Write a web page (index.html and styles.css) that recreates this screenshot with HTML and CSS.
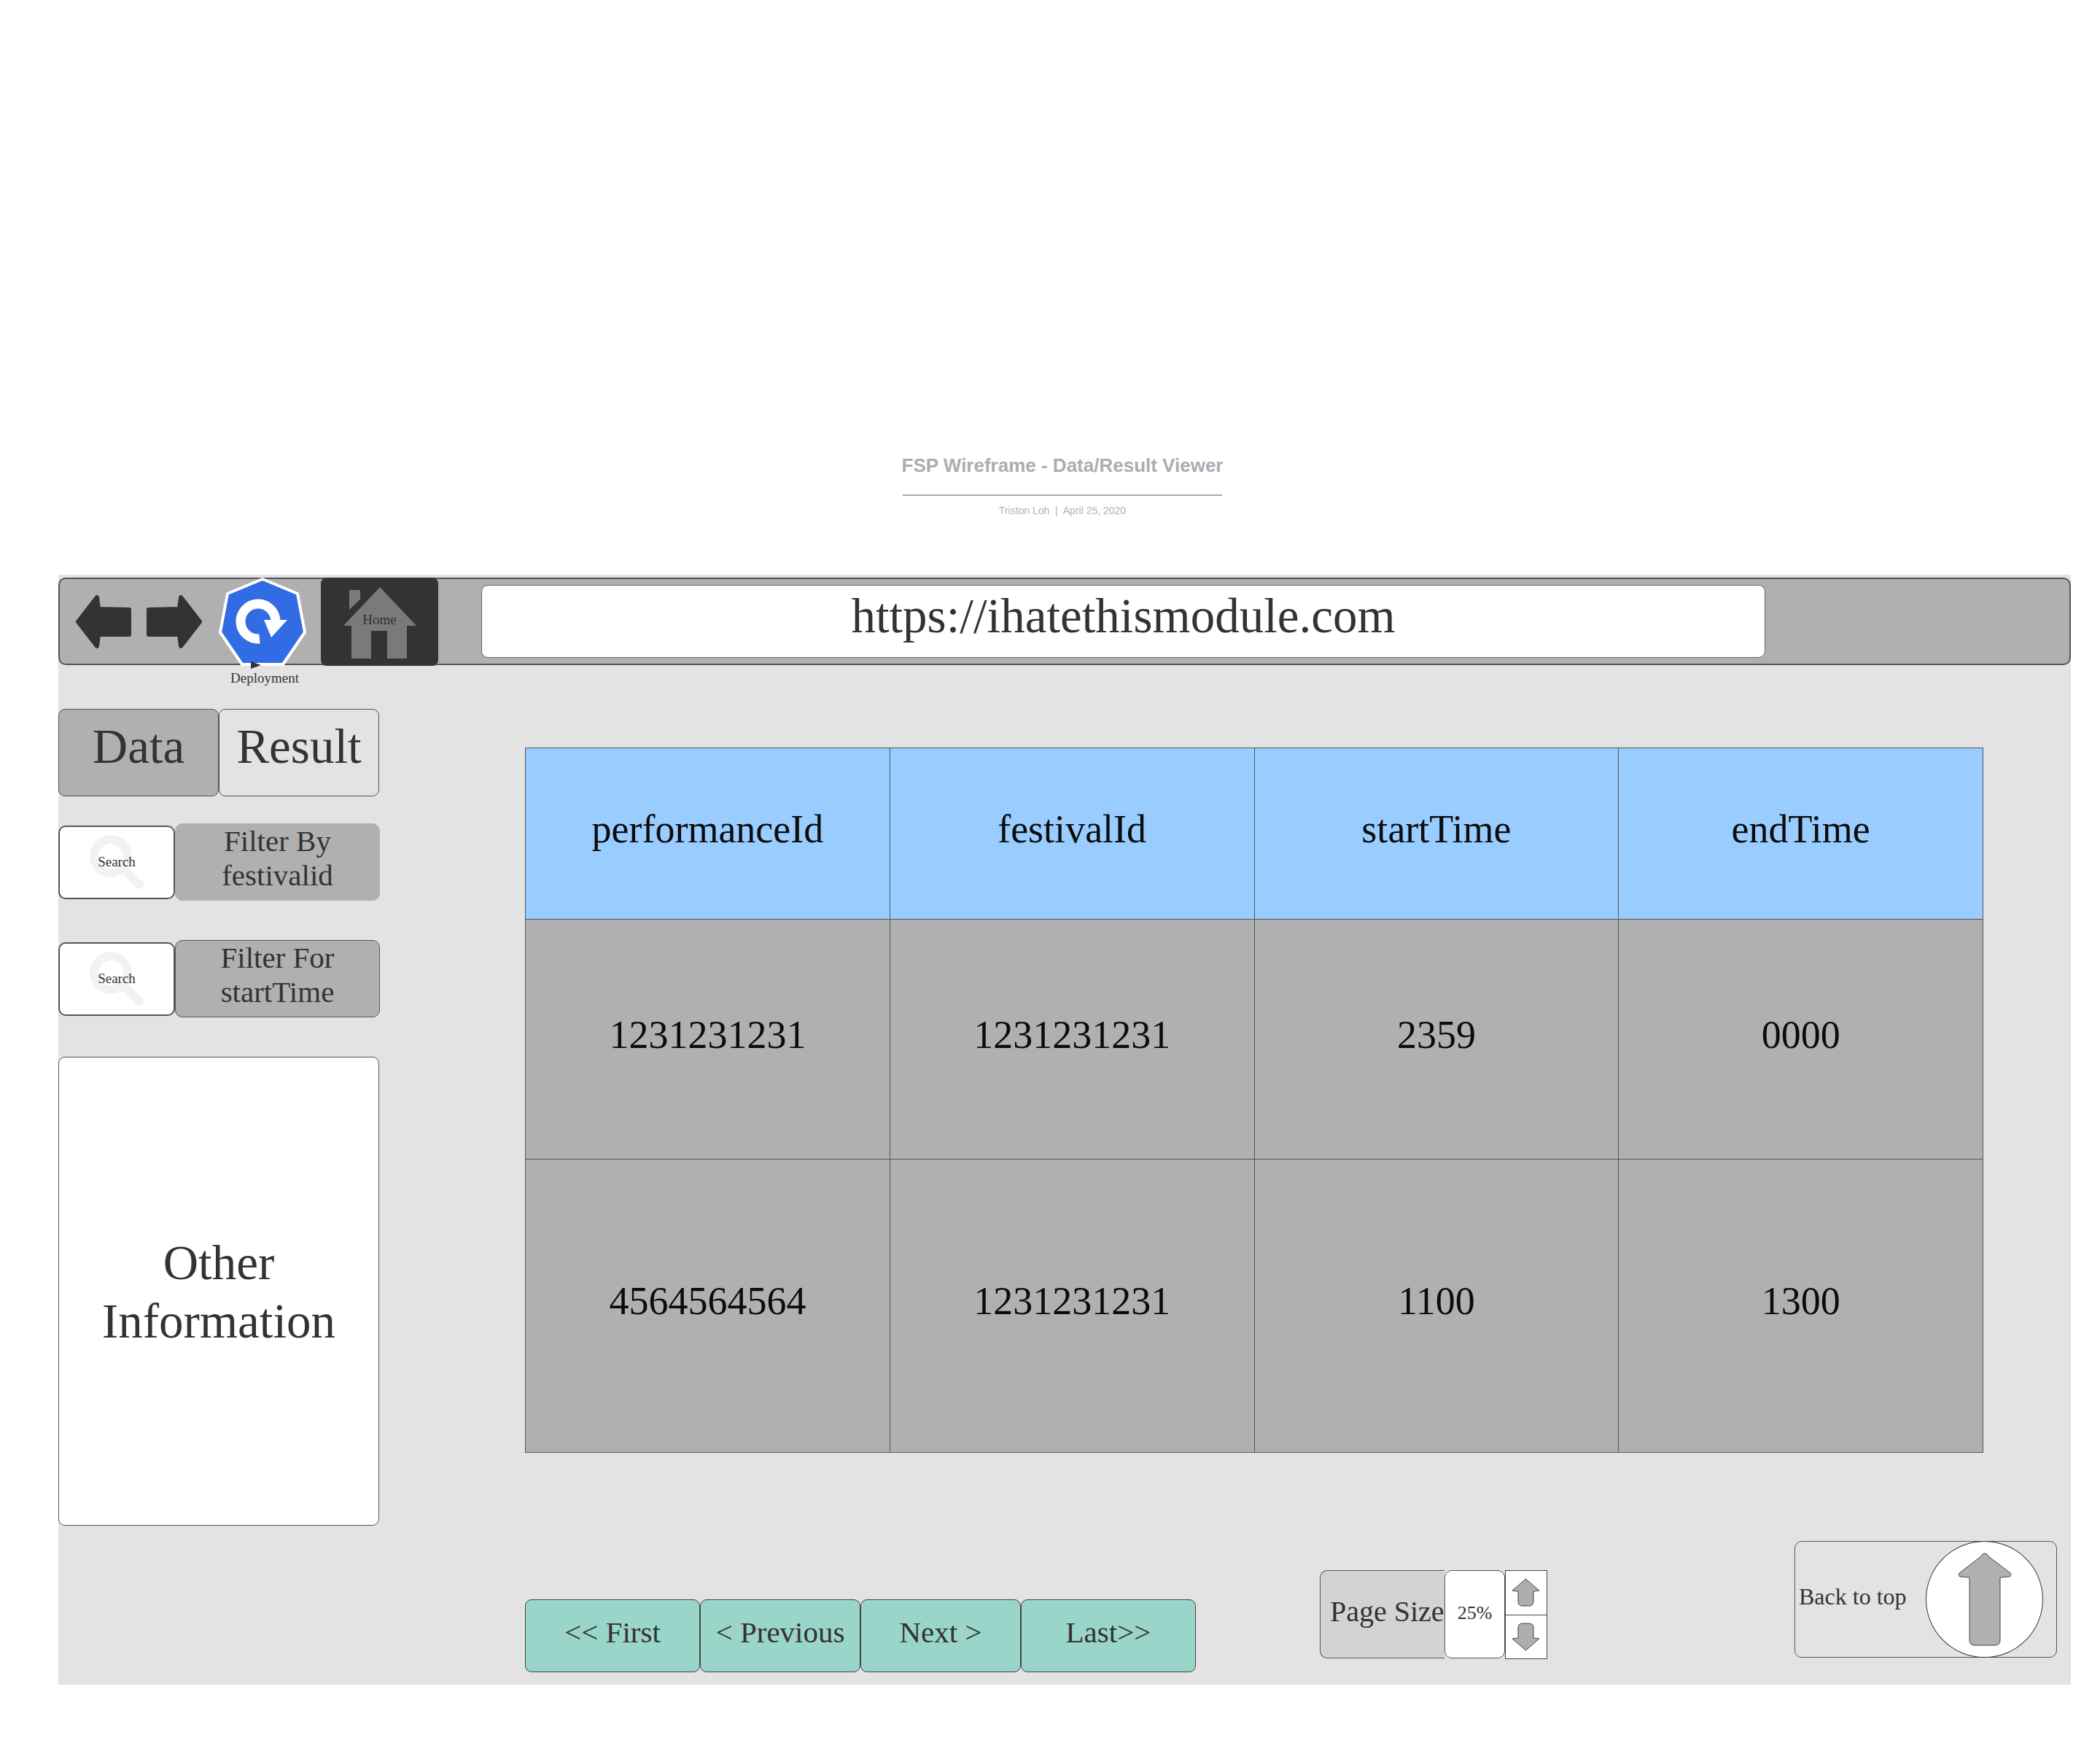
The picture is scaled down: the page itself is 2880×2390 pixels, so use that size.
FILE: index.html
```html
<!doctype html>
<html>
<head>
<meta charset="utf-8">
<title>FSP Wireframe - Data/Result Viewer</title>
<link rel="stylesheet" href="styles.css">
</head>
<body>

<div class="doc-head">
  <div class="doc-title">FSP Wireframe - Data/Result Viewer</div>
  <div class="doc-rule"></div>
  <div class="doc-sub">Triston Loh &nbsp;|&nbsp; April 25, 2020</div>
</div>

<div class="canvas">

  <div class="toolbar">
    <svg class="nav-arrow" viewBox="0 0 78 73">
      <path d="M4 36.500 L30 3 L32 19 L74 20 L74 54 L32 54 L30 70 Z"/>
    </svg>
    <svg class="nav-arrow" viewBox="0 0 78 73">
      <path d="M74 36.500 L48 3 L46 19 L4 20 L4 54 L46 54 L48 70 Z"/>
    </svg>
    <svg class="deploy-icon" viewBox="0 0 120 120">
      <polygon class="hept" points="60,2 108,22 118,75 88,119 32,119 2,75 12,22"/>
      <path class="swirl" d="M56 84 A24 24 0 1 1 78 60"/>
      <polygon class="swirl-head" points="62,58 94,58 72,82"/>
      <polygon class="pointer" points="44,115 58,120 44,125"/>
    </svg>
    <div class="home">
      <svg class="home-icon" viewBox="0 0 161 121">
        <polygon points="39,17 54,17 54,30 39,44"/>
        <path d="M81 13 L131 66 L118 66 L118 111 L91 111 L91 73 L69 73 L69 111 L42 111 L42 66 L31 66 Z"/>
      </svg>
      <span class="home-label">Home</span>
    </div>
    <div class="url-bar">https://ihatethismodule.com</div>
  </div>

  <div class="deploy-row">Deployment</div>

  <div class="workspace">

    <div class="sidebar">
      <div class="tabs">
        <div class="tab tab-on">Data</div>
        <div class="tab">Result</div>
      </div>

      <div class="filter first-filter">
        <div class="search">
          <svg class="lens" viewBox="0 0 74 74">
            <circle cx="29" cy="29" r="23"/>
            <line x1="46" y1="46" x2="68" y2="68"/>
          </svg>
          <span class="search-label">Search</span>
        </div>
        <div class="filter-name no-line">Filter By<br>festivalid</div>
      </div>

      <div class="filter">
        <div class="search">
          <svg class="lens" viewBox="0 0 74 74">
            <circle cx="29" cy="29" r="23"/>
            <line x1="46" y1="46" x2="68" y2="68"/>
          </svg>
          <span class="search-label">Search</span>
        </div>
        <div class="filter-name">Filter For<br>startTime</div>
      </div>

      <div class="other-info">Other<br>Information</div>
    </div>

    <div class="main">
      <table class="grid">
        <tr class="head-row">
          <th>performanceId</th>
          <th>festivalId</th>
          <th>startTime</th>
          <th>endTime</th>
        </tr>
        <tr class="row-one">
          <td>1231231231</td>
          <td>1231231231</td>
          <td>2359</td>
          <td>0000</td>
        </tr>
        <tr class="row-two">
          <td>4564564564</td>
          <td>1231231231</td>
          <td>1100</td>
          <td>1300</td>
        </tr>
      </table>

      <div class="bottom-bar">
        <div class="pager">
          <div class="page-btn wide">&lt;&lt; First</div>
          <div class="page-btn">&lt; Previous</div>
          <div class="page-btn">Next &gt;</div>
          <div class="page-btn wide">Last&gt;&gt;</div>
        </div>

        <div class="page-size">
          <div class="size-label">Page Size</div>
          <div class="size-value">25%</div>
          <div class="stepper">
            <div class="step">
              <svg class="step-arrow" viewBox="0 0 39 39">
                <path d="M19.500 1 L38 17 L30 18 L30 32 Q30 38 24 38 L15 38 Q9 38 9 32 L9 18 L1 17 Z"/>
              </svg>
            </div>
            <div class="step">
              <svg class="step-arrow" viewBox="0 0 39 39">
                <path d="M19.500 38 L38 22 L30 21 L30 7 Q30 1 24 1 L15 1 Q9 1 9 7 L9 21 L1 22 Z"/>
              </svg>
            </div>
          </div>
        </div>

        <div class="back-top">
          <span class="back-label">Back to top</span>
          <div class="back-circle">
            <svg class="back-arrow" viewBox="0 0 74 128">
              <path d="M37 1 Q40 1 42 5 L72 28 Q74 33 70 33 L58 34 L58 120 Q58 127 51 127 L23 127 Q16 127 16 120 L16 34 L4 33 Q0 33 2 28 L32 5 Q34 1 37 1 Z"/>
            </svg>
          </div>
        </div>
      </div>
    </div>

  </div>
</div>

</body>
</html>
```

FILE: styles.css
```css
body {
  margin: 0;
  font-family: "Liberation Serif", serif;
  color: #333;
  background: #fff;
}

/* document title above the wireframe */
.doc-head {
  height: 788px;
  padding-left: 80px;
  padding-right: 46px;
  box-sizing: border-box;
  display: flex;
  flex-direction: column;
  align-items: center;
  justify-content: flex-end;
  font-family: "Liberation Sans", sans-serif;
}

.doc-title {
  font-size: 26px;
  font-weight: bold;
  color: #a9adb4;
  line-height: 30px;
}

.doc-rule {
  width: 438px;
  height: 2px;
  margin-top: 25px;
  background: #a8a8a8;
}

.doc-sub {
  font-size: 14px;
  line-height: 16px;
  margin-top: 12px;
  margin-bottom: 80px;
  color: #b2b5bb;
}

.canvas {
  width: 2760px;
  margin-left: 80px;
  padding-top: 4px;
  background: #e3e3e3;
}

/* browser bar */
.toolbar {
  height: 120px;
  box-sizing: border-box;
  display: flex;
  align-items: center;
  background: #b0b0b0;
  border: 2px solid #555;
  border-radius: 10px;
}

.nav-arrow {
  width: 78px;
  height: 73px;
  margin-left: 21px;
  flex: none;
}

.nav-arrow + .nav-arrow {
  margin-left: 19px;
}

.nav-arrow path {
  fill: #333;
  stroke: #333;
  stroke-width: 6;
  stroke-linejoin: round;
}

.deploy-icon {
  width: 120px;
  height: 120px;
  margin-left: 22px;
  flex: none;
  overflow: visible;
}

.hept {
  fill: #326ce5;
  stroke: #fff;
  stroke-width: 4;
  stroke-linejoin: round;
}

.swirl {
  fill: none;
  stroke: #fff;
  stroke-width: 13;
}

.swirl-head {
  fill: #fff;
}

.pointer {
  fill: #333;
}

.home {
  width: 161px;
  height: 121px;
  margin-left: 20px;
  flex: none;
  display: grid;
  place-items: center;
  background: #333;
  border-radius: 8px;
}

.home-icon,
.home-label {
  grid-area: 1 / 1;
}

.home-icon {
  width: 161px;
  height: 121px;
  fill: #7a7a7a;
}

.home-label {
  font-size: 19px;
  margin-bottom: 4px;
}

.url-bar {
  width: 1761px;
  height: 100px;
  margin-left: 59px;
  box-sizing: border-box;
  background: #fff;
  border: 1px solid #666;
  border-radius: 9px;
  font-size: 67px;
  line-height: 82px;
  text-align: center;
  flex: none;
}

.deploy-row {
  height: 60px;
  padding-left: 236px;
  font-size: 19px;
  line-height: 36px;
}

/* sidebar and table */
.workspace {
  display: flex;
}

.sidebar {
  width: 440px;
  flex: none;
}

.tabs {
  display: flex;
  height: 120px;
}

.tab {
  width: 220px;
  box-sizing: border-box;
  border: 1px solid #555;
  border-radius: 9px;
  font-size: 67px;
  line-height: 100px;
  text-align: center;
}

.tab-on {
  background: #b0b0b0;
}

.filter {
  display: flex;
  align-items: center;
  height: 106px;
  margin-top: 54px;
}

.first-filter {
  margin-top: 37px;
}

.search {
  width: 160px;
  height: 101px;
  box-sizing: border-box;
  flex: none;
  display: grid;
  place-items: center;
  background: #fff;
  border: 2px solid #555;
  border-radius: 10px;
}

.lens,
.search-label {
  grid-area: 1 / 1;
}

.lens {
  width: 74px;
  height: 74px;
  fill: none;
  stroke: #f2f2f2;
  stroke-width: 12;
  stroke-linecap: round;
}

.search-label {
  font-size: 19px;
}

.filter-name {
  width: 281px;
  height: 106px;
  box-sizing: border-box;
  flex: none;
  background: #b0b0b0;
  border: 1px solid #555;
  border-radius: 10px;
  font-size: 41px;
  line-height: 47px;
  text-align: center;
}

.no-line {
  border-color: #b0b0b0;
}

.other-info {
  height: 643px;
  margin-top: 54px;
  box-sizing: border-box;
  display: flex;
  align-items: center;
  justify-content: center;
  text-align: center;
  background: #fff;
  border: 1px solid #555;
  border-radius: 9px;
  font-size: 67px;
  line-height: 80px;
}

.main {
  margin-left: 200px;
  padding-top: 53px;
  padding-bottom: 17px;
}

.grid {
  width: 2000px;
  table-layout: fixed;
  border-collapse: collapse;
  font-size: 54px;
  color: #0c0c0c;
}

.grid th,
.grid td {
  border: 1px solid #555;
  text-align: center;
  font-weight: normal;
  padding: 0 0 13px;
}

.head-row {
  height: 235px;
  background: #99ccff;
}

.row-one {
  height: 329px;
  background: #b0b0b0;
}

.row-two {
  height: 402px;
  background: #b0b0b0;
}

/* paging and page size */
.bottom-bar {
  display: flex;
  align-items: flex-start;
  margin-top: 121px;
}

.pager {
  display: flex;
  margin-top: 80px;
}

.page-btn {
  width: 220px;
  height: 100px;
  box-sizing: border-box;
  background: #9ad5ca;
  border: 1px solid #444;
  border-radius: 9px;
  font-size: 41px;
  line-height: 88px;
  text-align: center;
}

.wide {
  width: 240px;
}

.page-size {
  display: flex;
  height: 121px;
  margin-top: 40px;
  margin-left: 170px;
}

.size-label {
  width: 171px;
  box-sizing: border-box;
  background: #d3d3d3;
  border: 1px solid #555;
  border-right: 0;
  border-radius: 10px 0 0 10px;
  font-size: 40px;
  line-height: 112px;
  padding-left: 13px;
  white-space: nowrap;
}

.size-value {
  width: 83px;
  box-sizing: border-box;
  background: #fff;
  border: 1px solid #555;
  border-radius: 10px;
  font-size: 26px;
  line-height: 116px;
  text-align: center;
}

.stepper {
  width: 58px;
  display: flex;
  flex-direction: column;
}

.step {
  flex: 1;
  display: flex;
  align-items: center;
  justify-content: center;
  background: #fff;
  border: 1px solid #444;
  margin-bottom: -1px;
  padding-right: 8px;
  padding-left: 6px;
}

.step-arrow {
  width: 39px;
  height: 39px;
  fill: #aeaeae;
  stroke: #444;
  stroke-width: 1;
}

.back-top {
  width: 360px;
  height: 160px;
  box-sizing: border-box;
  margin-left: 339px;
  display: flex;
  align-items: center;
  background: #e3e3e3;
  border: 1px solid #555;
  border-radius: 10px;
}

.back-label {
  width: 179px;
  flex: none;
  padding-left: 5px;
  box-sizing: border-box;
  font-size: 32px;
  margin-bottom: 8px;
  white-space: nowrap;
}

.back-circle {
  width: 161px;
  height: 160px;
  box-sizing: border-box;
  flex: none;
  display: flex;
  align-items: center;
  justify-content: center;
  background: #fff;
  border: 1px solid #333;
  border-radius: 50%;
}

.back-arrow {
  width: 74px;
  height: 128px;
  fill: #b0b0b0;
  stroke: #444;
  stroke-width: 1;
}
```
